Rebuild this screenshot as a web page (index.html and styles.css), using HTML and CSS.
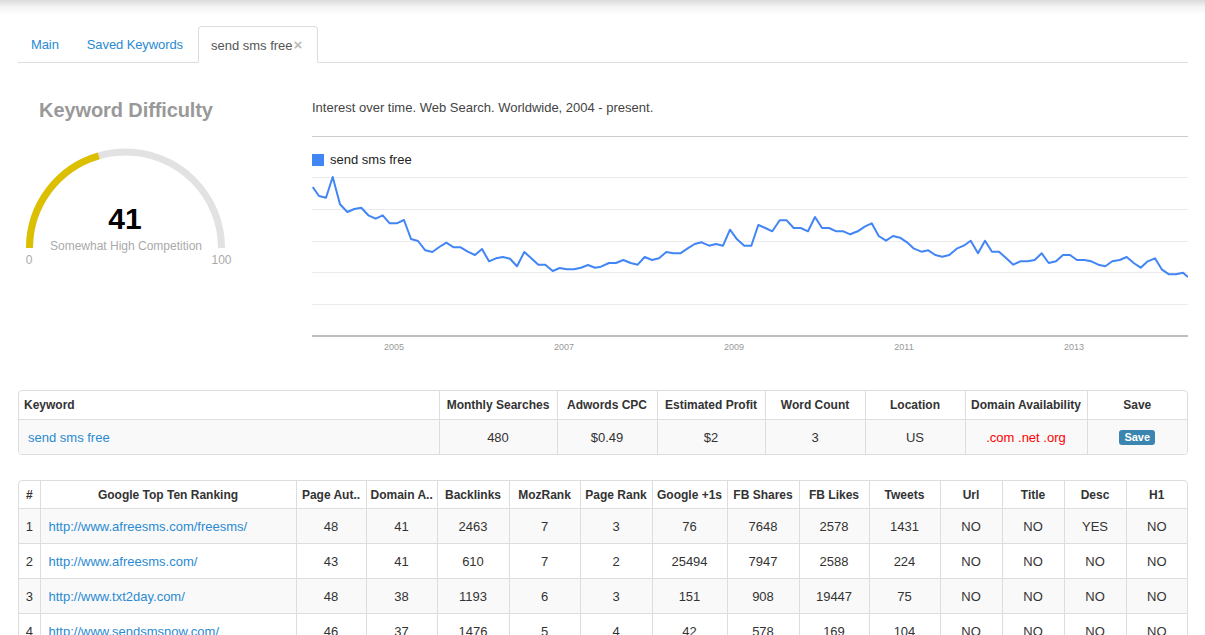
FILE: index.html
```html
<!DOCTYPE html>
<html>
<head>
<meta charset="utf-8">
<title>Keyword Research</title>
<link rel="stylesheet" href="styles.css">
</head>
<body>
<div class="page">
  <ul class="tabs">
    <li class="tab"><a class="tab-link">Main</a></li>
    <li class="tab"><a class="tab-link">Saved Keywords</a></li>
    <li class="tab active"><span class="tab-link">send sms free<span class="close">×</span></span></li>
  </ul>

  <div class="overview">
    <div class="difficulty">
      <h2 class="difficulty-title">Keyword Difficulty</h2>
      <svg class="gauge" width="216" height="130" viewBox="0 0 216 130">
        <path d="M11.5 108 A96 96 0 0 1 203.5 108" fill="none" stroke="#e2e2e2" stroke-width="7"/>
        <path d="M11.5 108 A96 96 0 0 1 80.7 15.8" fill="none" stroke="#dcc000" stroke-width="7"/>
        <text x="107" y="89" class="g-value">41</text>
        <text x="108" y="110" class="g-label">Somewhat High Competition</text>
        <text x="11" y="124" class="g-scale">0</text>
        <text x="203.5" y="124" class="g-scale">100</text>
      </svg>
    </div>

    <div class="trend">
      <p class="trend-title">Interest over time. Web Search. Worldwide, 2004 - present.</p>
      <div class="legend"><span class="swatch"></span>send sms free</div>
      <svg class="chart" width="876" height="185" viewBox="0 0 876 185">
        <g stroke="#ebebeb" stroke-width="1">
          <line x1="0" x2="876" y1="6.5" y2="6.5"/>
          <line x1="0" x2="876" y1="38.5" y2="38.5"/>
          <line x1="0" x2="876" y1="70.5" y2="70.5"/>
          <line x1="0" x2="876" y1="101.5" y2="101.5"/>
          <line x1="0" x2="876" y1="133.5" y2="133.5"/>
        </g>
        <line x1="0" x2="876" y1="165" y2="165" stroke="#a8a8a8" stroke-width="1.5"/>
        <polyline fill="none" stroke="#4285f4" stroke-width="2" stroke-linejoin="round"
          points="0.7,16 7,25 14,26.7 20.7,6 28,33.3 35.3,41 42.3,38 49.3,36.7 56.3,44.3 63.7,47.7 70.7,44.3 77.7,52.3 84.7,52.3 92,49 99,68 106,70 113.3,79.3 120.3,81 127.3,76 134.3,71.7 141.7,76.3 148.7,76.3 155.7,80.7 163,84 170,78 177,90.3 184,87.3 191,86 198,87.7 205,95.3 212.3,81 219.3,87.3 226.3,93.7 233.3,93.7 240.7,100 247.7,97 254.7,98.3 262,98.3 269,96.7 276,94 283,96.7 289,95.7 297,92 304,92 311.3,89 318.7,92 325.7,93.7 332.7,86 340,89 347,87.3 354.3,81 361.3,82.3 368.3,82.3 375.3,77.7 382.7,73 389.7,71.3 397,74.7 404,73 411,74.7 418,58.7 425,68.3 432.3,74.7 439.3,74.7 446.3,54 453.3,57 460.3,60.3 467.7,49.3 474.7,49.3 481.7,57 488.7,57 496,60.3 503,46 510,57 517,57 524.3,60.3 531.3,60.3 538.3,63.3 545.7,60.3 552.7,55.7 559.7,52.3 566.7,65 574,69.7 581,65 588,66.7 595,71.3 602,77.7 609.3,80.7 616.3,79.3 623.3,84 630.3,85.7 637.3,84 644.7,77.7 651.7,74.7 658.7,69.7 666,82.3 673,69.7 680,80.7 687,80.7 694.3,87.3 701.3,93.7 708.3,90.3 715.7,90.3 722.7,89 729.7,82.3 736.7,92 744,90.3 751,84 758,84 765,89 772.3,89 779.3,90.3 786.3,93.7 793.3,95.3 800.3,90.3 807.7,89 814.7,86 821.7,92 828.7,96.7 835.7,90.3 843,87.3 850,98.7 857,103.3 864,103.3 871,101.7 876,106"/>
        <g class="axis-labels">
          <text x="82" y="179">2005</text>
          <text x="252" y="179">2007</text>
          <text x="422" y="179">2009</text>
          <text x="592" y="179">2011</text>
          <text x="762" y="179">2013</text>
        </g>
      </svg>
    </div>
  </div>

  <div class="panel summary-panel">
    <table class="grid summary">
      <colgroup>
        <col style="width:420px"><col style="width:118px"><col style="width:100px"><col style="width:108px">
        <col style="width:100px"><col style="width:100px"><col style="width:122px"><col style="width:100px">
      </colgroup>
      <thead>
        <tr>
          <th class="left">Keyword</th>
          <th>Monthly Searches</th>
          <th>Adwords CPC</th>
          <th>Estimated Profit</th>
          <th>Word Count</th>
          <th>Location</th>
          <th>Domain Availability</th>
          <th>Save</th>
        </tr>
      </thead>
      <tbody>
        <tr class="shade">
          <td class="left kw"><a class="link">send sms free</a></td>
          <td>480</td>
          <td>$0.49</td>
          <td>$2</td>
          <td>3</td>
          <td>US</td>
          <td class="domains">.com .net .org</td>
          <td><span class="save-btn">Save</span></td>
        </tr>
      </tbody>
    </table>
  </div>

  <div class="panel ranking-panel">
    <table class="grid ranking">
      <colgroup>
        <col style="width:21px"><col style="width:256px"><col style="width:70px"><col style="width:71px">
        <col style="width:72px"><col style="width:71px"><col style="width:72px"><col style="width:75px">
        <col style="width:72px"><col style="width:70px"><col style="width:71px"><col style="width:62px">
        <col style="width:62px"><col style="width:62px"><col style="width:61px">
      </colgroup>
      <thead>
        <tr>
          <th>#</th>
          <th>Google Top Ten Ranking</th>
          <th>Page Aut..</th>
          <th>Domain A..</th>
          <th>Backlinks</th>
          <th>MozRank</th>
          <th>Page Rank</th>
          <th>Google +1s</th>
          <th>FB Shares</th>
          <th>FB Likes</th>
          <th>Tweets</th>
          <th>Url</th>
          <th>Title</th>
          <th>Desc</th>
          <th>H1</th>
        </tr>
      </thead>
      <tbody>
        <tr class="shade">
          <td>1</td><td class="left url"><a class="link">http://www.afreesms.com/freesms/</a></td>
          <td>48</td><td>41</td><td>2463</td><td>7</td><td>3</td><td>76</td><td>7648</td><td>2578</td><td>1431</td>
          <td>NO</td><td>NO</td><td>YES</td><td>NO</td>
        </tr>
        <tr>
          <td>2</td><td class="left url"><a class="link">http://www.afreesms.com/</a></td>
          <td>43</td><td>41</td><td>610</td><td>7</td><td>2</td><td>25494</td><td>7947</td><td>2588</td><td>224</td>
          <td>NO</td><td>NO</td><td>NO</td><td>NO</td>
        </tr>
        <tr class="shade">
          <td>3</td><td class="left url"><a class="link">http://www.txt2day.com/</a></td>
          <td>48</td><td>38</td><td>1193</td><td>6</td><td>3</td><td>151</td><td>908</td><td>19447</td><td>75</td>
          <td>NO</td><td>NO</td><td>NO</td><td>NO</td>
        </tr>
        <tr>
          <td>4</td><td class="left url"><a class="link">http://www.sendsmsnow.com/</a></td>
          <td>46</td><td>37</td><td>1476</td><td>5</td><td>4</td><td>42</td><td>578</td><td>169</td><td>104</td>
          <td>NO</td><td>NO</td><td>NO</td><td>NO</td>
        </tr>
      </tbody>
    </table>
  </div>
</div>
</body>
</html>
```

FILE: styles.css
```css
html, body {
  margin: 0;
  padding: 0;
}

body {
  font-family: "Liberation Sans", Arial, sans-serif;
  font-size: 13px;
  color: #333;
  background: #fff linear-gradient(to bottom, #dadada 0px, #f4f4f4 7px, #ffffff 15px) no-repeat;
  background-size: 100% 16px;
}

.page {
  padding: 0 17px 0 18px;
}

/* Tabs */
.tabs {
  list-style: none;
  margin: 26px 0 0;
  padding: 0;
  display: flex;
  border-bottom: 1px solid #ddd;
}

.tab {
  margin: 0 2px -1px 0;
  border: 1px solid transparent;
  border-radius: 4px 4px 0 0;
}

.tab-link {
  display: block;
  padding: 7px 12px;
  line-height: 21px;
  height: 21px;
  color: #2a8ad2;
  letter-spacing: -0.1px;
}

.tab.active {
  border-color: #ddd;
  border-bottom-color: #fff;
  background: #fff;
}

.tab.active .tab-link {
  color: #555;
  padding-right: 15px;
  letter-spacing: 0;
}

.close {
  color: #bbb;
  font-weight: bold;
  font-size: 15px;
  margin-left: 1px;
}

/* Overview */
.overview {
  display: flex;
  gap: 78px;
}

.difficulty {
  width: 216px;
  flex: none;
}

.difficulty-title {
  margin: 35px 0 0;
  font-size: 20px;
  line-height: 24px;
  font-weight: bold;
  color: #999;
  text-align: center;
  letter-spacing: -0.1px;
}

.gauge {
  display: block;
  margin-top: 18px;
}

.g-value {
  font-family: "Liberation Sans", Arial, sans-serif;
  font-size: 30px;
  font-weight: bold;
  fill: #000;
  text-anchor: middle;
}

.g-label, .g-scale {
  font-family: "Liberation Sans", Arial, sans-serif;
  font-size: 12px;
  fill: #aaa;
  text-anchor: middle;
}

.trend {
  width: 876px;
  flex: none;
}

.trend-title {
  margin: 35px 0 0;
  line-height: 20px;
  padding-bottom: 18px;
  border-bottom: 1px solid #ccc;
  color: #444;
}

.legend {
  margin-top: 16px;
  height: 13px;
  line-height: 13px;
  display: flex;
  align-items: center;
  color: #222;
}

.swatch {
  width: 12px;
  height: 12px;
  background: #4285f4;
  margin-right: 6px;
}

.chart {
  display: block;
  margin-top: 5px;
}

.axis-labels text {
  font-family: "Liberation Sans", Arial, sans-serif;
  font-size: 9px;
  fill: #999;
  text-anchor: middle;
}

/* Tables */
.panel {
  border: 1px solid #ddd;
  border-radius: 4px;
  overflow: hidden;
}

.summary-panel {
  margin-top: 34px;
}

.ranking-panel {
  margin-top: 25px;
}

.grid {
  width: 1168px;
  table-layout: fixed;
  border-collapse: collapse;
}

.grid th, .grid td {
  border-left: 1px solid #ddd;
  border-top: 1px solid #ddd;
  text-align: center;
  white-space: nowrap;
  overflow: hidden;
  padding: 0 4px;
}

.grid tr > :first-child {
  border-left: none;
}

.grid thead th {
  border-top: none;
  font-size: 12px;
  font-weight: bold;
  color: #333;
}

.summary thead th {
  height: 28px;
}

.summary td {
  height: 34px;
}

.ranking thead th {
  height: 27px;
}

.ranking td {
  height: 34px;
}

.grid .left {
  text-align: left;
}

.summary th.left {
  padding-left: 5px;
}

.summary td.kw {
  padding-left: 9px;
}

.ranking td.url {
  padding-left: 8px;
}

.shade td {
  background: #f9f9f9;
}

.link {
  color: #2a8ad2;
}

.domains {
  color: #f00;
}

.save-btn {
  display: inline-block;
  background: #3b86b0;
  color: #fff;
  font-size: 11px;
  font-weight: bold;
  line-height: 15px;
  padding: 0 5px;
  border-radius: 3px;
}
```
